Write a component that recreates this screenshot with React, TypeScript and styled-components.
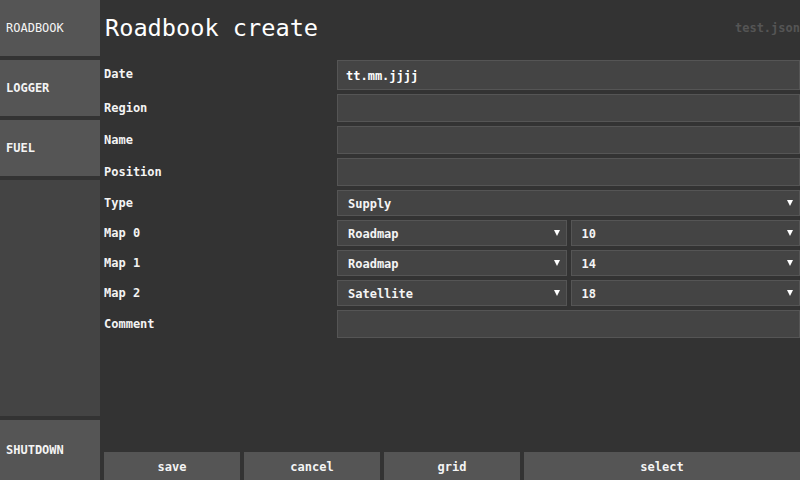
import React from "react";
import styled, { createGlobalStyle } from "styled-components";

const GlobalStyle = createGlobalStyle`
  html, body {
    margin: 0;
    padding: 0;
    background: #333333;
    overflow: hidden;
  }
  * { box-sizing: border-box; }
`;

const mono = `"DejaVu Sans Mono", "Liberation Mono", monospace`;

const Root = styled.div`
  width: 800px;
  height: 480px;
  display: grid;
  grid-template-columns: 100px 1fr;
  background: #333333;
  font-family: ${mono};
  color: #f2f2f2;
  overflow: hidden;
`;

const Sidebar = styled.nav`
  display: flex;
  flex-direction: column;
  gap: 4px;
`;

const NavButton = styled.button<{ $h: number; $active?: boolean }>`
  height: ${(p) => p.$h}px;
  flex: none;
  border: none;
  margin: 0;
  padding: 0 0 0 6px;
  background: #555555;
  color: #f4f4f4;
  font-family: ${mono};
  font-size: 12px;
  font-weight: ${(p) => (p.$active ? 400 : 700)};
  text-align: left;
`;

const Filler = styled.div`
  flex: 1;
  background: #444444;
`;

const Main = styled.main`
  display: flex;
  flex-direction: column;
  padding-left: 4px;
  min-width: 0;
`;

const Header = styled.header`
  height: 56px;
  flex: none;
  display: flex;
  align-items: center;
  justify-content: space-between;
  margin-bottom: 4px;
`;

const Title = styled.h1`
  margin: 0 0 0 1px;
  font-family: ${mono};
  font-size: 23.6px;
  font-weight: 400;
  color: #ffffff;
`;

const FileName = styled.span`
  font-size: 12px;
  font-weight: 700;
  color: #555555;
  padding-bottom: 1px;
`;

const Form = styled.form`
  display: grid;
  grid-template-columns: 233px 1fr;
  row-gap: 4px;
  align-items: center;
`;

const Label = styled.label<{ $lift?: number }>`
  font-size: 12px;
  font-weight: 700;
  color: #f4f4f4;
  align-self: center;
  margin-top: ${(p) => -(p.$lift ?? 1)}px;
`;

const TextInput = styled.input<{ $h: number }>`
  height: ${(p) => p.$h}px;
  width: 100%;
  margin: 0;
  padding: 1px 0 0 8px;
  background: #444444;
  border: 1px solid #555555;
  color: #ffffff;
  font-family: ${mono};
  font-size: 12px;
  font-weight: 700;
  outline: none;
`;

const SelectPair = styled.div`
  display: grid;
  grid-template-columns: 1fr 1fr;
  gap: 4px;
`;

const SelectBox = styled.div`
  position: relative;
  height: 26px;
  &::after {
    content: "";
    position: absolute;
    right: 7px;
    top: 10px;
    border-left: 3.5px solid transparent;
    border-right: 3.5px solid transparent;
    border-top: 6px solid #ffffff;
  }
`;

const NativeSelect = styled.select`
  appearance: none;
  -webkit-appearance: none;
  width: 100%;
  height: 26px;
  margin: 0;
  padding: 2px 0 0 10px;
  background: #444444;
  border: 1px solid #555555;
  border-radius: 0;
  color: #f4f4f4;
  font-family: ${mono};
  font-size: 12px;
  font-weight: 700;
  outline: none;
`;

const Footer = styled.div`
  margin-top: auto;
  display: flex;
  gap: 4px;
  height: 28px;
`;

const ActionButton = styled.button<{ $grow?: boolean }>`
  flex: ${(p) => (p.$grow ? "1" : "0 0 136px")};
  margin: 0;
  border: none;
  padding: 1px 0 0;
  background: #555555;
  color: #f4f4f4;
  font-family: ${mono};
  font-size: 12px;
  font-weight: 700;
`;

const Select: React.FC<{ value: string; options: string[] }> = ({ value, options }) => (
  <SelectBox>
    <NativeSelect defaultValue={value}>
      {options.map((o) => (
        <option key={o} value={o}>
          {o}
        </option>
      ))}
    </NativeSelect>
  </SelectBox>
);

const mapTypes = ["Roadmap", "Satellite", "Hybrid", "Terrain"];
const zooms = Array.from({ length: 21 }, (_, i) => String(i));

const maps: [string, string][] = [
  ["Roadmap", "10"],
  ["Roadmap", "14"],
  ["Satellite", "18"],
];

export default function App() {
  return (
    <>
      <GlobalStyle />
      <Root>
        <Sidebar>
          <NavButton $h={56} $active>ROADBOOK</NavButton>
          <NavButton $h={56}>LOGGER</NavButton>
          <NavButton $h={56}>FUEL</NavButton>
          <Filler />
          <NavButton $h={60}>SHUTDOWN</NavButton>
        </Sidebar>
        <Main>
          <Header>
            <Title>Roadbook create</Title>
            <FileName>test.json</FileName>
          </Header>
          <Form onSubmit={(e) => e.preventDefault()}>
            <Label $lift={3}>Date</Label>
            <TextInput $h={30} defaultValue="tt.mm.jjjj" />
            <Label>Region</Label>
            <TextInput $h={28} />
            <Label>Name</Label>
            <TextInput $h={28} />
            <Label>Position</Label>
            <TextInput $h={28} />
            <Label $lift={0}>Type</Label>
            <Select value="Supply" options={["Supply", "Hotel", "Fuel", "Sight"]} />
            {maps.map(([t, z], i) => (
              <React.Fragment key={i}>
                <Label $lift={0}>Map {i}</Label>
                <SelectPair>
                  <Select value={t} options={mapTypes} />
                  <Select value={z} options={zooms} />
                </SelectPair>
              </React.Fragment>
            ))}
            <Label>Comment</Label>
            <TextInput $h={28} />
          </Form>
          <Footer>
            <ActionButton>save</ActionButton>
            <ActionButton>cancel</ActionButton>
            <ActionButton>grid</ActionButton>
            <ActionButton $grow>select</ActionButton>
          </Footer>
        </Main>
      </Root>
    </>
  );
}
